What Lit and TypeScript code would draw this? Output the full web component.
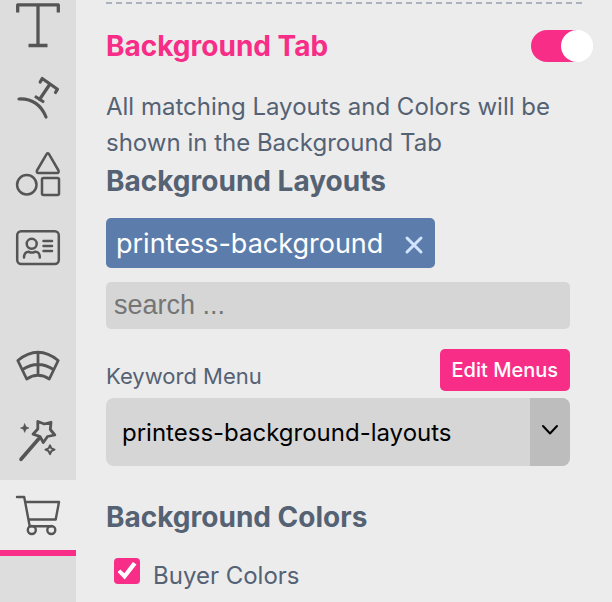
import { LitElement, html, css, svg, TemplateResult } from "lit";
import { customElement, state } from "lit/decorators.js";

interface Tool {
  id: string;
  label: string;
  icon: TemplateResult;
  spaced?: boolean;
}

const TOOLS: Tool[] = [
  {
    id: "text",
    label: "Text",
    icon: svg`<g stroke-width="3.300" stroke-linecap="butt"><path d="M1.700 9.500V1.800H42.300V9.500M22 1.500V42M12.500 42.500H31.500"/></g>`,
  },
  {
    id: "curved",
    label: "Curved text",
    icon: svg`<g stroke-width="3.200"><path d="M3 22C16 21.500 25 28 30 40"/><path d="M24.200 5L26.200 1.500L41.500 12.200L39.500 15.500M34 7L23.500 22.500M20 20L27 24.500"/></g>`,
  },
  {
    id: "shapes",
    label: "Shapes",
    icon: svg`<g stroke-width="2.500"><circle cx="10.800" cy="33.800" r="9.700"/><rect x="26" y="27" width="17" height="17" rx="1.500"/><path d="M30.600 3.200Q31.800 1.500 33 3.200L42.500 19.500Q43.200 21.800 41 22H22.500Q20.200 21.800 21 19.500Z"/></g>`,
  },
  {
    id: "contact",
    label: "Contact card",
    icon: svg`<g stroke-width="2.500"><rect x="1.200" y="6.200" width="41.600" height="32.800" rx="4"/><circle cx="15.700" cy="18.800" r="5"/><path d="M8 32.500C8 28.500 10 26.500 13 26.800Q15.800 28.400 18.800 26.800C22 26.500 23.800 28.500 23.800 32.500"/><path d="M27.500 16H36M27.500 21H36M27.500 26H36"/></g>`,
  },
  {
    id: "warp",
    label: "Warp",
    spaced: true,
    icon: svg`<g stroke-width="2.800"><path d="M1.800 13.500Q22 -3 42.200 13.500L33.300 32Q22 24.500 10.700 32ZM6.500 22.500Q22 12.500 37.500 22.500M22 5.500V28"/></g>`,
  },
  {
    id: "magic",
    label: "Magic",
    icon: svg`<path stroke-width="2.800" d="M21.800 .5L28.300 3L35 1.300L34.300 8.500L38.800 14L31.500 15.500L27.300 21.500L24 15.500L17 13.200L21.800 8Z"/><path stroke-width="3.600" d="M23 17.500L5 38.300"/><path fill="#555" stroke-width=".6" d="M8.700 2.800L10 5.800L13 7L10 8.300L8.700 11.400L7.400 8.300L4.500 7L7.400 5.800Z"/><path stroke-width="2" d="M34 24.300L35.400 27.300L38.500 28.700L35.400 30.100L34 33.200L32.600 30.100L29.500 28.700L32.600 27.300Z"/>`,
  },
  {
    id: "shop",
    label: "Shop",
    icon: svg`<g stroke-width="2.400"><path d="M1 4H8.200L13.700 33.200H35.500M9.800 9H43L39.700 26.500H12.800"/><circle cx="15.800" cy="37" r="4"/><circle cx="35.300" cy="37" r="4"/></g>`,
  },
];

@customElement("app-root")
export class AppRoot extends LitElement {
  @state() private active = "shop";
  @state() private tags = ["printess-background"];

  static styles = css`
    :host {
      display: grid;
      grid-template-columns: 76px minmax(0, 1fr);
      height: 100vh;
      overflow: hidden;
      background: #ececec;
      color: #546274;
      font-family: Inter, "Noto Sans", sans-serif;
    }
    * {
      box-sizing: border-box;
    }
    button,
    input,
    select {
      font: inherit;
      margin: 0;
      border: 0;
    }
    .tools {
      display: flex;
      flex-direction: column;
      background: #ddd;
      /* the strip rests slightly scrolled, so its first tool is clipped */
      margin-top: -12px;
    }
    .tool {
      display: grid;
      place-items: center;
      flex: none;
      height: 74px;
      padding: 0;
      background: none;
    }
    .tool.spaced {
      margin-top: 48px;
    }
    .tool.active {
      height: 76px;
      background: #ececec;
      border-bottom: 6px solid #f72d87;
    }
    .tool svg {
      width: 44px;
      height: 44px;
      overflow: visible;
      fill: none;
      stroke: #555;
      stroke-linecap: round;
      stroke-linejoin: round;
    }
    .panel {
      padding: 2px 19px 0 30px;
    }
    .divider {
      height: 2px;
      margin: 0 9px 26px 0;
      border: 0;
      background: repeating-linear-gradient(90deg, #abb2bc 0 6px, transparent 6px 10px);
    }
    .header {
      display: flex;
      align-items: center;
      justify-content: space-between;
    }
    h2,
    h3,
    p {
      margin: 0;
    }
    h2,
    h3 {
      font-size: 28px;
      line-height: 32px;
      font-weight: 700;
    }
    h2 {
      color: #f72d87;
    }
    .switch {
      appearance: none;
      display: flex;
      justify-content: flex-start;
      width: 62px;
      height: 32px;
      border-radius: 16px;
      background: #bbb;
    }
    .switch::before {
      content: "";
      width: 32px;
      border-radius: 50%;
      background: #fff;
    }
    .switch:checked {
      justify-content: flex-end;
      background: linear-gradient(90deg, #f72d87 46px, #fff 46px);
    }
    .body {
      margin: 27px 23px 0 0;
    }
    .hint {
      font-size: 24px;
      line-height: 36px;
      margin-bottom: 4px;
    }
    .tags {
      display: flex;
      flex-wrap: wrap;
      gap: 8px;
      margin: 21px 0 14px;
    }
    .tag {
      display: flex;
      align-items: center;
      gap: 20px;
      height: 50px;
      padding: 0 10px;
      border-radius: 5px;
      background: #5c7dab;
      color: #fff;
      font-size: 27px;
    }
    .remove {
      display: grid;
      padding: 4px 0 0;
      background: none;
    }
    .remove svg {
      width: 22px;
      height: 22px;
      fill: none;
      stroke: #d3e4ff;
      stroke-width: 3;
      stroke-linecap: round;
    }
    .search {
      display: block;
      width: 100%;
      height: 47px;
      padding: 0 8px;
      border-radius: 5px;
      background: #d6d6d6;
      color: #000;
      font-family: "Liberation Sans", sans-serif;
      font-size: 27px;
    }
    .search::placeholder {
      color: #757575;
    }
    .menu-row {
      display: flex;
      align-items: flex-end;
      justify-content: space-between;
      margin: 20px 0 7px;
    }
    .menu-row label {
      font-size: 22px;
      line-height: 30px;
    }
    .edit {
      height: 42px;
      padding: 0 12px;
      border-radius: 5px;
      background: #f72d87;
      color: #fff;
      font-size: 20px;
      font-weight: 500;
    }
    .select {
      display: grid;
      grid-template-columns: 1fr 40px;
      height: 68px;
      border-radius: 8px;
      overflow: hidden;
      background: #d6d6d6;
      margin-bottom: 35px;
    }
    .select select {
      grid-area: 1 / 1 / 2 / 3;
      appearance: none;
      padding: 0 56px 0 16px;
      background: none;
      color: #000;
      font-size: 24px;
    }
    .arrow {
      grid-area: 1 / 2;
      display: grid;
      place-items: center;
      padding-bottom: 4px;
      background: #bdbdbd;
      pointer-events: none;
    }
    .arrow svg {
      width: 16px;
      height: 10px;
      overflow: visible;
      fill: none;
      stroke: #000;
      stroke-width: 2;
      stroke-linecap: round;
      stroke-linejoin: round;
    }
    .check {
      display: flex;
      align-items: flex-start;
      gap: 13px;
      margin: 25px 8px 0;
      font-size: 24px;
      line-height: 26px;
    }
    .check input {
      appearance: none;
      display: grid;
      place-items: center;
      width: 26px;
      height: 26px;
      border-radius: 4px;
      background: #d6d6d6;
    }
    .check input:checked {
      background: #f72d87;
    }
    .check input:checked::before {
      content: "";
      width: 19px;
      height: 18px;
      background: #fff;
      clip-path: polygon(0 56%, 15% 42%, 36% 62%, 81% 0, 100% 14%, 38% 97%);
    }
    .check label {
      padding-top: 5px;
    }
  `;

  render() {
    return html`
      <nav class="tools" aria-label="Tools">
        ${TOOLS.map(
          (t) => html`<button
            class="tool ${t.spaced ? "spaced" : ""} ${t.id === this.active ? "active" : ""}"
            aria-label=${t.label}
            @click=${() => (this.active = t.id)}
          >
            <svg viewBox="0 0 44 44" aria-hidden="true">${t.icon}</svg>
          </button>`
        )}
      </nav>
      <main class="panel">
        <hr class="divider" />
        <div class="header">
          <h2 id="tab-title">Background Tab</h2>
          <input class="switch" type="checkbox" role="switch" aria-labelledby="tab-title" checked />
        </div>
        <div class="body">
          <p class="hint">All matching Layouts and Colors will be shown in the Background Tab</p>
          <h3 id="layouts">Background Layouts</h3>
          <div class="tags">
            ${this.tags.map(
              (tag) => html`<span class="tag"
                >${tag}<button
                  class="remove"
                  aria-label="Remove ${tag}"
                  @click=${() => (this.tags = this.tags.filter((x) => x !== tag))}
                >
                  <svg viewBox="0 0 22 22" aria-hidden="true"><path d="M4 4L18 18M18 4L4 18" /></svg></button
              ></span>`
            )}
          </div>
          <input class="search" type="text" placeholder="search ..." aria-labelledby="layouts" />
          <div class="menu-row">
            <label for="menu">Keyword Menu</label>
            <button class="edit">Edit Menus</button>
          </div>
          <div class="select">
            <select id="menu">
              <option>printess-background-layouts</option>
            </select>
            <span class="arrow">
              <svg viewBox="0 0 16 10" aria-hidden="true"><path d="M1 1L8 8.500L15 1" /></svg>
            </span>
          </div>
          <h3>Background Colors</h3>
          <div class="check">
            <input id="buyer" type="checkbox" checked />
            <label for="buyer">Buyer Colors</label>
          </div>
        </div>
      </main>
    `;
  }
}
